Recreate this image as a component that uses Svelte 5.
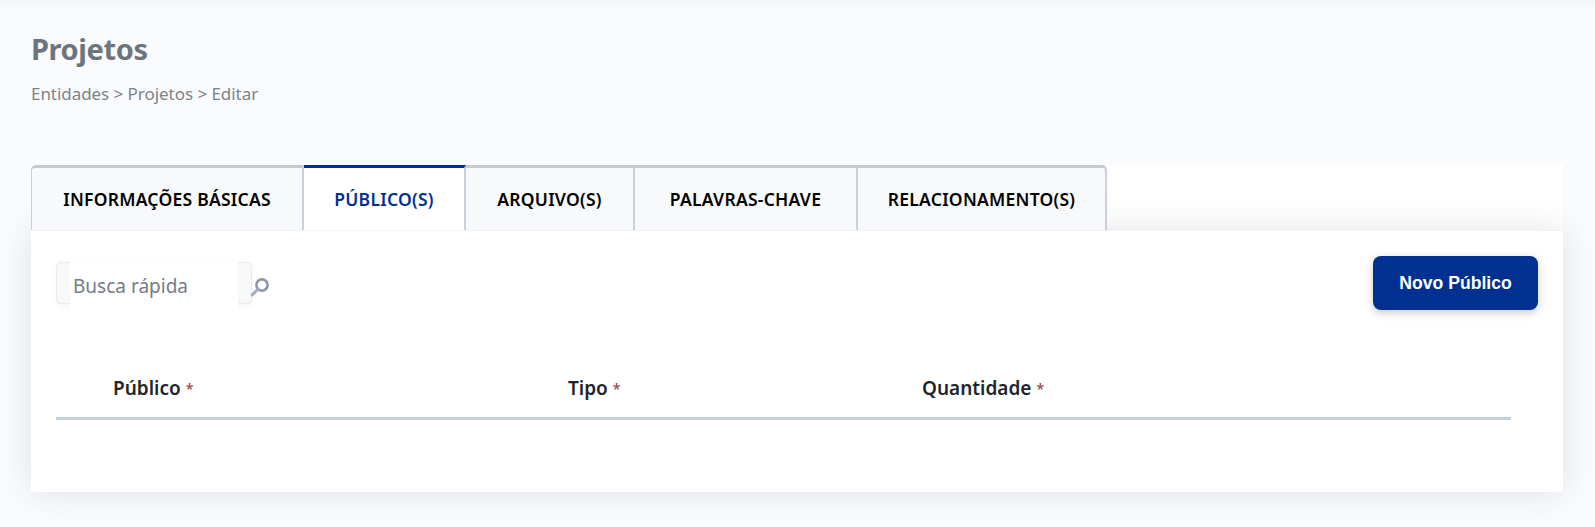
<script lang="ts">
  const tabs = [
    { label: "INFORMAÇÕES BÁSICAS", width: 273 },
    { label: "PÚBLICO(S)", width: 162, active: true },
    { label: "ARQUIVO(S)", width: 169 },
    { label: "PALAVRAS-CHAVE", width: 223 },
    { label: "RELACIONAMENTO(S)", width: 249 },
  ];
  const colunas = ["Público", "Tipo", "Quantidade"];
</script>

<div class="pagina">
  <header class="cabecalho">
    <h1>Projetos</h1>
    <p>Entidades &gt; Projetos &gt; Editar</p>
  </header>

  <section class="conteudo">
    <nav class="abas">
      {#each tabs as tab}
        <button type="button" class="aba" class:ativa={tab.active} style="width: {tab.width}px">{tab.label}</button>
      {/each}
    </nav>

    <div class="card">
      <div class="barra">
        <div class="busca">
          <div class="campo">
            <input type="text" placeholder="Busca rápida" />
          </div>
          <svg class="lupa" width="22" height="22" viewBox="0 0 22 22" aria-hidden="true">
            <circle cx="13" cy="9" r="5.6" fill="none" stroke="#8d97ab" stroke-width="2.6" />
            <path d="M9 13.2 3.2 19" stroke="#a3acbd" stroke-width="3" stroke-linecap="round" />
          </svg>
        </div>
        <button type="button" class="novo">Novo Público</button>
      </div>

      <div class="tabela">
        {#each colunas as coluna}
          <div class="coluna">{coluna} <span class="obrigatorio">*</span></div>
        {/each}
      </div>
    </div>
  </section>
</div>

<style>
  :global(body) {
    background: #fafbfd;
  }

  .pagina {
    height: 527px;
    overflow: hidden;
    box-sizing: border-box;
    padding: 0 32px 0 31px;
    background: linear-gradient(#f3f4f7, #fafbfd 12px);
    font-family: "Noto Sans", "Open Sans", sans-serif;
  }

  .cabecalho {
    height: 165px;
    padding: 29px 0 0;
    box-sizing: border-box;
  }

  h1 {
    margin: 0;
    font-size: 29px;
    line-height: 40px;
    font-weight: 700;
    letter-spacing: -0.4px;
    color: #6c757d;
  }

  p {
    margin: 14px 0 0;
    font-size: 17px;
    line-height: 22px;
    letter-spacing: -0.05px;
    color: #7d8389;
  }

  .conteudo {
    background: #fff;
  }

  .abas {
    display: flex;
    height: 65px;
    position: relative;
    z-index: 3;
  }

  .aba {
    box-sizing: border-box;
    height: 65px;
    padding: 0;
    background: #f8f9fb;
    border: none;
    border-top: 3px solid #c8c9cb;
    border-right: 2px solid #c9d1dd;
    font-family: inherit;
    font-size: 17.5px;
    font-weight: 600;
    letter-spacing: 0.25px;
    color: #000;
  }

  .aba:first-child {
    border-left: 1px solid #c5cedb;
    border-top-left-radius: 5px;
  }

  .aba:last-child {
    border-top-right-radius: 5px;
  }

  .aba.ativa {
    background: #fff;
    border-top-color: #002f94;
    color: #002f94;
  }

  .card {
    position: relative;
    z-index: 2;
    height: 262px;
    box-sizing: border-box;
    padding: 25px 25px 0;
    background: #fff;
    border-top: 1px solid #f1f2f5;
    box-shadow: 0 0 32px rgba(40, 50, 70, 0.13);
  }

  .barra {
    display: flex;
    justify-content: space-between;
    align-items: flex-start;
  }

  .busca {
    display: flex;
    align-items: center;
    margin-top: 6px;
  }

  .campo {
    box-sizing: border-box;
    width: 196px;
    height: 42px;
    padding: 0 13px;
    background: #f7f8fa;
    border: 1px solid #e8eaee;
    border-radius: 5px;
    box-shadow: 0 2px 6px rgba(40, 50, 70, 0.05);
  }

  input {
    display: block;
    box-sizing: border-box;
    width: 168px;
    height: 47px;
    margin-top: -1px;
    padding: 0 3px;
    border: none;
    outline: none;
    background: #fff;
    font-family: inherit;
    font-size: 19px;
  }

  input::placeholder {
    color: #757c84;
    opacity: 1;
  }

  .lupa {
    margin: 8px 0 0 -3px;
  }

  .novo {
    width: 165px;
    height: 54px;
    padding: 0;
    border: none;
    border-radius: 8px;
    background: #003092;
    box-shadow: 0 3px 8px rgba(40, 50, 70, 0.25);
    color: #fff;
    font-family: "Liberation Sans", Arial, sans-serif;
    font-size: 17.6px;
    font-weight: 700;
  }

  .tabela {
    display: grid;
    grid-template-columns: 455px 354px 1fr;
    width: 1455px;
    box-sizing: border-box;
    margin-top: 52px;
    height: 58px;
    padding: 0 0 0 57px;
    border-bottom: 3px solid #c5cedb;
  }

  .coluna {
    font-size: 19px;
    line-height: 53px;
    font-weight: 600;
    color: #212529;
  }

  .obrigatorio {
    color: #a04a55;
    font-size: 14px;
    vertical-align: 1px;
  }
</style>
